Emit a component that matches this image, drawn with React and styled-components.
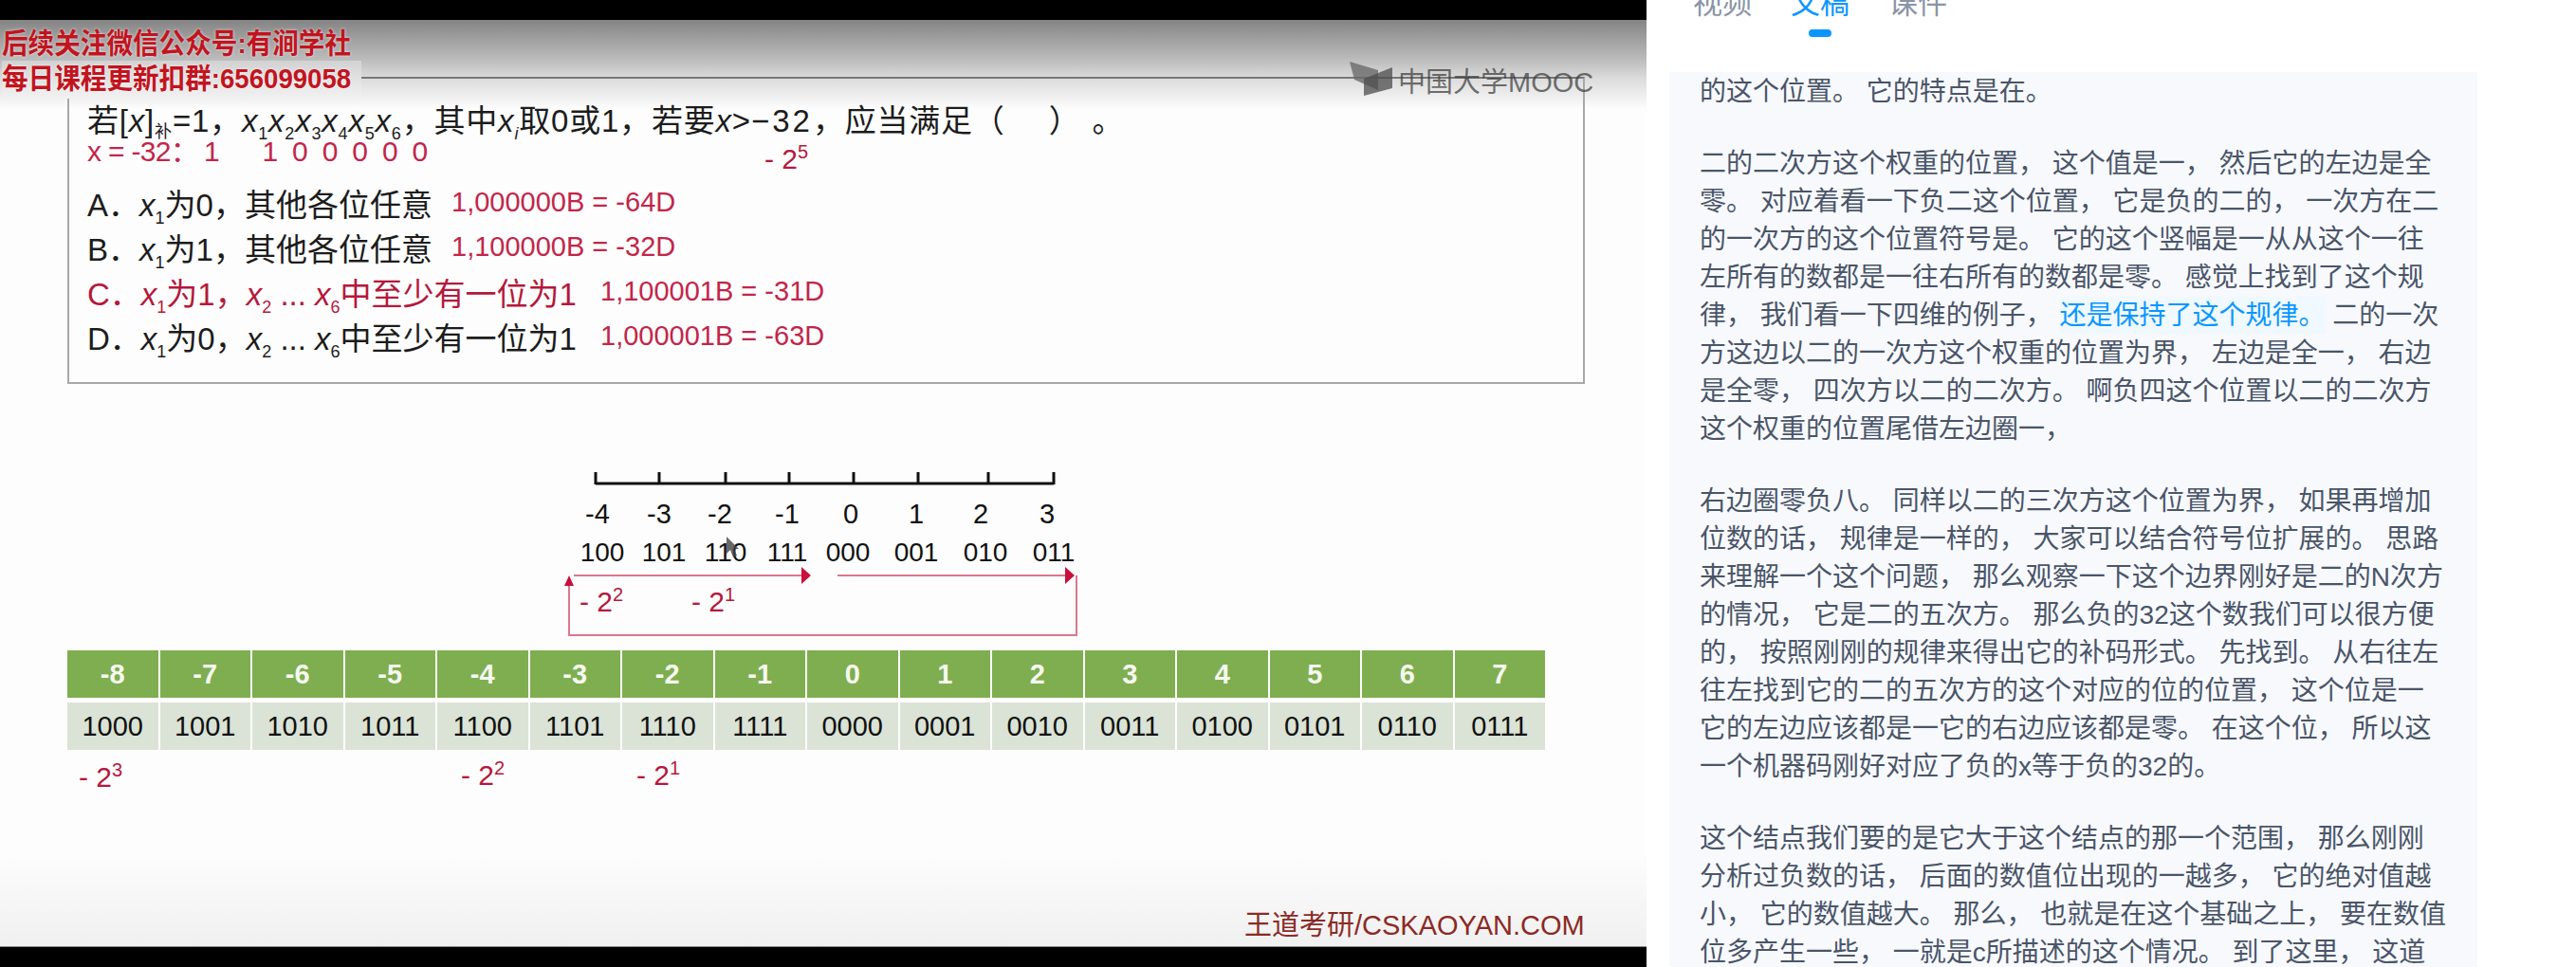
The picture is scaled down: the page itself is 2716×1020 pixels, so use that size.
import React from "react";
import styled, { createGlobalStyle } from "styled-components";

const tabs = ["视频", "文稿", "课件"];

const paragraphs = [
  ["的这个位置。 它的特点是在。"],
  [
    "二的二次方这个权重的位置， 这个值是一， 然后它的左边是全",
    "零。 对应着看一下负二这个位置， 它是负的二的， 一次方在二",
    "的一次方的这个位置符号是。 它的这个竖幅是一从从这个一往",
    "左所有的数都是一往右所有的数都是零。 感觉上找到了这个规",
    ["律， 我们看一下四维的例子， ", "还是保持了这个规律。", " 二的一次"],
    "方这边以二的一次方这个权重的位置为界， 左边是全一， 右边",
    "是全零， 四次方以二的二次方。 啊负四这个位置以二的二次方",
    "这个权重的位置尾借左边圈一，",
  ],
  [
    "右边圈零负八。 同样以二的三次方这个位置为界， 如果再增加",
    "位数的话， 规律是一样的， 大家可以结合符号位扩展的。 思路",
    "来理解一个这个问题， 那么观察一下这个边界刚好是二的N次方",
    "的情况， 它是二的五次方。 那么负的32这个数我们可以很方便",
    "的， 按照刚刚的规律来得出它的补码形式。 先找到。 从右往左",
    "往左找到它的二的五次方的这个对应的位的位置， 这个位是一",
    "它的左边应该都是一它的右边应该都是零。 在这个位， 所以这",
    "一个机器码刚好对应了负的x等于负的32的。",
  ],
  [
    "这个结点我们要的是它大于这个结点的那一个范围， 那么刚刚",
    "分析过负数的话， 后面的数值位出现的一越多， 它的绝对值越",
    "小， 它的数值越大。 那么， 也就是在这个基础之上， 要在数值",
    "位多产生一些， 一就是c所描述的这个情况。 到了这里， 这道",
  ],
];

const values = [-8, -7, -6, -5, -4, -3, -2, -1, 0, 1, 2, 3, 4, 5, 6, 7];
const codes = values.map((v) => (v & 15).toString(2).padStart(4, "0"));

const axisTicks = [628, 695, 765, 832, 900, 968, 1042, 1111];
const axisLabels = [
  ["-4", 630], ["-3", 695], ["-2", 759], ["-1", 830],
  ["0", 897], ["1", 966], ["2", 1034], ["3", 1104],
];
const axisCodes = [
  ["100", 635], ["101", 700], ["110", 765], ["111", 830],
  ["000", 894], ["001", 966], ["010", 1039], ["011", 1111],
];

const tablePowers = [
  { col: 1, exp: 3, offset: 12, top: 0 },
  { col: 5, exp: 2, offset: 25, top: -2 },
  { col: 7, exp: 1, offset: 15, top: -2 },
];

const Power = ({ exp }) => (
  <PowerText>
    - 2<sup>{exp}</sup>
  </PowerText>
);

const X = ({ n }) => (
  <>
    <i>x</i>
    <sub>{n}</sub>
  </>
);

const NumberLine = () => (
  <Diagram viewBox="0 0 1600 190">
    {/* coordinates are page x - 71, page y - 490 */}
    <g transform="translate(-71 -490)">
      <path
        d={`M628 510H1111 ${axisTicks.map((x) => `M${x} 498V511`).join(" ")}`}
        stroke="#111"
        strokeWidth="3"
        fill="none"
      />
      {axisLabels.map(([t, x]) => (
        <text key={t} x={x} y={552} textAnchor="middle" fontSize="29" fill="#111">
          {t}
        </text>
      ))}
      {axisCodes.map(([t, x]) => (
        <text key={t} x={x} y={592} textAnchor="middle" fontSize="28" fill="#111">
          {t}
        </text>
      ))}
      <path
        d="M605 607H848 M883 607H1126 M1135 607V670H600V615"
        stroke="#d9788f"
        strokeWidth="2"
        fill="none"
      />
      <path d="M845 598L855 607L845 616Z M1123 598L1133 607L1123 616Z M600 607L595 618H605Z" fill="#c8103c" />
      <text x={611} y={645} fontSize="30" fill="#b5183c">
        - 2<tspan dy="-11" fontSize="20">2</tspan>
      </text>
      <text x={729} y={645} fontSize="30" fill="#b5183c">
        - 2<tspan dy="-11" fontSize="20">1</tspan>
      </text>
      <path
        d="M766 566L766 584L770 580L773 588L777 586L774 579L779 579Z"
        fill="#444"
        fillOpacity="0.8"
      />
    </g>
  </Diagram>
);

const App = () => (
  <>
    <GlobalStyle />
    <Page>
      <VideoPanel>
        <BlackBar />
        <Slide>
          <Logo>
            <svg width="50" height="38" viewBox="0 0 50 38">
              <path d="M0 0L30 9V30L5 19Z" fill="#6a6a6a" fillOpacity="0.8" />
              <path d="M15 18L45 6V28L15 36Z" fill="#4c4c4c" fillOpacity="0.75" />
            </svg>
            <span>中国大学MOOC</span>
          </Logo>
          <QuestionBox>
            <Question>
              若[<i>x</i>]<Small>补</Small>=1，<X n={1} /><X n={2} /><X n={3} /><X n={4} /><X n={5} /><X n={6} />，其中<i>x</i><sub><i>i</i></sub>取0或1，若要<i>x</i>&gt;<Wide>−32</Wide>，应当满足（
              <Blank $width={46} />）<Blank $width={12} />。
            </Question>
            <WorkRow>
              <WorkSum>x = -32：</WorkSum>1&nbsp;&nbsp;&nbsp;1 0 0 0 0 0
              <WorkPower>
                <Power exp={5} />
              </WorkPower>
            </WorkRow>
            <OptionRow>
              <OptionText>A．<X n={1} />为0，其他各位任意</OptionText>
              <Note $left={476}>1,000000B = -64D</Note>
            </OptionRow>
            <OptionRow>
              <OptionText>B．<X n={1} />为1，其他各位任意</OptionText>
              <Note $left={476}>1,100000B = -32D</Note>
            </OptionRow>
            <OptionRow>
              <OptionText $red>C．<X n={1} />为1，<X n={2} /> ... <X n={6} />中至少有一位为1</OptionText>
              <Note $left={633}>1,100001B = -31D</Note>
            </OptionRow>
            <OptionRow>
              <OptionText>D．<X n={1} />为0，<X n={2} /> ... <X n={6} />中至少有一位为1</OptionText>
              <Note $left={633}>1,000001B = -63D</Note>
            </OptionRow>
          </QuestionBox>
          <NumberLine />
          <CodeTable>
            {values.map((v) => (
              <HeadCell key={v}>{v}</HeadCell>
            ))}
            {codes.map((c) => (
              <CodeCell key={c}>{c}</CodeCell>
            ))}
          </CodeTable>
          <PowerRow>
            {tablePowers.map((p) => (
              <PowerSlot key={p.col} $col={p.col} $offset={p.offset} $top={p.top}>
                <Power exp={p.exp} />
              </PowerSlot>
            ))}
          </PowerRow>
          <SlideFooter>王道考研/CSKAOYAN.COM</SlideFooter>
          <Watermark>
            <div>后续关注微信公众号:有涧学社</div>
            <WatermarkLast>每日课程更新扣群:656099058</WatermarkLast>
          </Watermark>
        </Slide>
        <BlackBar $bottom />
      </VideoPanel>
      <SidePanel>
        <TabRow>
          {tabs.map((tab) => (
            <Tab key={tab} $active={tab === "文稿"}>
              {tab}
              {tab === "文稿" && <TabMarker />}
            </Tab>
          ))}
        </TabRow>
        <Transcript>
          {paragraphs.map((lines, i) => (
            <Paragraph key={i}>
              {lines.map((line, j) => (
                <Line key={j}>
                  {Array.isArray(line) ? (
                    <>
                      {line[0]}
                      <Highlight>{line[1]}</Highlight>
                      {line[2]}
                    </>
                  ) : (
                    line
                  )}
                </Line>
              ))}
            </Paragraph>
          ))}
        </Transcript>
      </SidePanel>
    </Page>
  </>
);

const GlobalStyle = createGlobalStyle`
  html, body {
    margin: 0;
    padding: 0;
    background: #fff;
  }
  body {
    font-family: "Liberation Sans", "Noto Sans CJK SC", sans-serif;
  }
`;

const Page = styled.div`
  display: flex;
  width: 2716px;
  height: 1020px;
  overflow: hidden;
`;

const VideoPanel = styled.div`
  display: flex;
  flex-direction: column;
  width: 1736px;
  flex-shrink: 0;
  background: #000;
`;

const BlackBar = styled.div`
  height: ${(p) => (p.$bottom ? "22px" : "21px")};
  flex-shrink: 0;
  background: #000;
  border-top: ${(p) => (p.$bottom ? "1px solid #888" : "none")};
  box-sizing: border-box;
`;

const Slide = styled.div`
  position: relative;
  display: flex;
  flex-direction: column;
  flex: 1;
  padding: 60px 65px 4px 71px;
  box-sizing: border-box;
  background:
    linear-gradient(#848484 0, #a2a2a2 22px, #bcbcbc 42px, #dcdcdc 62px, #f2f2f2 84px, #fbfbfb 92px, transparent 94px),
    linear-gradient(#fdfdfd 90%, #f0f0f0 100%);
  overflow: hidden;
`;

const Watermark = styled.div`
  position: absolute;
  left: 2px;
  top: 6px;
  font-size: 30px;
  line-height: 37px;
  font-weight: 700;
  color: #c2141e;
  white-space: nowrap;
  transform: scaleX(0.92);
  transform-origin: left top;
  text-shadow: 0 0 3px rgba(255, 255, 255, 0.8);
`;

const WatermarkLast = styled.div`
  padding: 0 12px 3px 0;
  background: linear-gradient(#d2d2d2, #f2f2f2);
`;

const Logo = styled.div`
  position: absolute;
  left: 1423px;
  top: 42px;
  display: flex;
  align-items: center;
  gap: 1px;
  font-size: 29px;
  color: rgba(60, 60, 60, 0.72);
  white-space: nowrap;
`;

const QuestionBox = styled.div`
  height: 324px;
  box-sizing: border-box;
  flex-shrink: 0;
  padding: 25px 0 0 19px;
  border: 2px solid #a8a8a8;
  border-top-color: #777;
`;

const Question = styled.div`
  height: 40px;
  font-size: 33px;
  line-height: 40px;
  letter-spacing: 0.8px;
  color: #1c1c1c;
  white-space: nowrap;

  sub {
    font-size: 18px;
    line-height: 0;
  }
`;

const Small = styled.span`
  font-size: 18px;
  position: relative;
  top: 6px;
`;

const Wide = styled.span`
  letter-spacing: 3px;
`;

const Blank = styled.span`
  display: inline-block;
  width: ${(p) => p.$width}px;
`;

const WorkRow = styled.div`
  position: relative;
  height: 49px;
  margin-top: -4px;
  font-size: 30px;
  line-height: 32px;
  word-spacing: 6.6px;
  color: #c2264a;
  white-space: pre;
`;

const WorkSum = styled.span`
  margin-right: 6px;
  letter-spacing: -0.7px;
  word-spacing: 0;
`;

const WorkPower = styled.div`
  position: absolute;
  left: 714px;
  top: 6px;
  word-spacing: 0;
`;

const PowerText = styled.span`
  font-size: 30px;
  line-height: 36px;
  color: #b5183c;
  white-space: nowrap;

  sup {
    font-size: 20px;
    line-height: 0;
    vertical-align: 11px;
  }
`;

const OptionRow = styled.div`
  position: relative;
  height: 47px;
  display: flex;
  align-items: center;
`;

const OptionText = styled.div`
  font-size: 33px;
  line-height: 40px;
  color: ${(p) => (p.$red ? "#b5183c" : "#1c1c1c")};
  white-space: nowrap;

  sub {
    font-size: 18px;
    line-height: 0;
  }
`;

const Note = styled.div`
  position: absolute;
  left: ${(p) => p.$left - 92}px;
  top: 2px;
  font-size: 29px;
  line-height: 36px;
  color: #c2264a;
  white-space: nowrap;
`;

const Diagram = styled.svg`
  display: block;
  width: 1600px;
  height: 190px;
  margin-top: 85px;
  flex-shrink: 0;
  overflow: visible;
  font-family: "Liberation Sans", sans-serif;
`;

const CodeTable = styled.div`
  display: grid;
  grid-template-columns: repeat(16, 1fr);
  grid-template-rows: 50px 50px;
  row-gap: 5px;
  column-gap: 2px;
  width: 1558px;
  margin-top: 6px;
  flex-shrink: 0;
`;

const HeadCell = styled.div`
  display: flex;
  align-items: center;
  justify-content: center;
  background: #7fae50;
  font-size: 29px;
  font-weight: 700;
  color: #f6f9f0;
`;

const CodeCell = styled.div`
  display: flex;
  align-items: center;
  justify-content: center;
  background: #dae3d5;
  font-size: 29px;
  color: #111;
`;

const PowerRow = styled.div`
  display: grid;
  grid-template-columns: repeat(16, 1fr);
  column-gap: 2px;
  width: 1558px;
  margin-top: 11px;
`;

const PowerSlot = styled.div`
  grid-column: ${(p) => p.$col};
  grid-row: 1;
  padding-left: ${(p) => p.$offset}px;
  margin-top: ${(p) => p.$top}px;
`;

const SlideFooter = styled.div`
  margin-top: auto;
  align-self: flex-start;
  margin-left: 1241px;
  font-size: 29px;
  line-height: 36px;
  color: #8b2a25;
  white-space: nowrap;
`;

const SidePanel = styled.div`
  display: flex;
  flex-direction: column;
  flex: 1;
  min-width: 0;
  background: #fff;
`;

const TabRow = styled.div`
  display: flex;
  gap: 41px;
  height: 76px;
  flex-shrink: 0;
  padding-left: 49px;
  box-sizing: border-box;
  overflow: hidden;
`;

const Tab = styled.div`
  display: flex;
  flex-direction: column;
  align-items: center;
  margin-top: -16px;
  font-size: 31px;
  line-height: 40px;
  color: ${(p) => (p.$active ? "#0a96ff" : "#8a94a6")};
`;

const TabMarker = styled.span`
  width: 24px;
  height: 8px;
  margin-top: 7px;
  border-radius: 4px;
  background: #0a96ff;
`;

const Transcript = styled.div`
  flex: 1;
  margin: 0 104px 0 24px;
  padding: 1px 0 0 32px;
  background: #f7f9fd;
  overflow: hidden;
`;

const Paragraph = styled.div`
  margin-bottom: 36px;
`;

const Line = styled.div`
  font-size: 28px;
  line-height: 40px;
  color: #4a5568;
  white-space: pre;
`;

const Highlight = styled.span`
  padding: 4px 0;
  background: #f0f9ff;
  color: #0a96ff;
`;

export default App;
